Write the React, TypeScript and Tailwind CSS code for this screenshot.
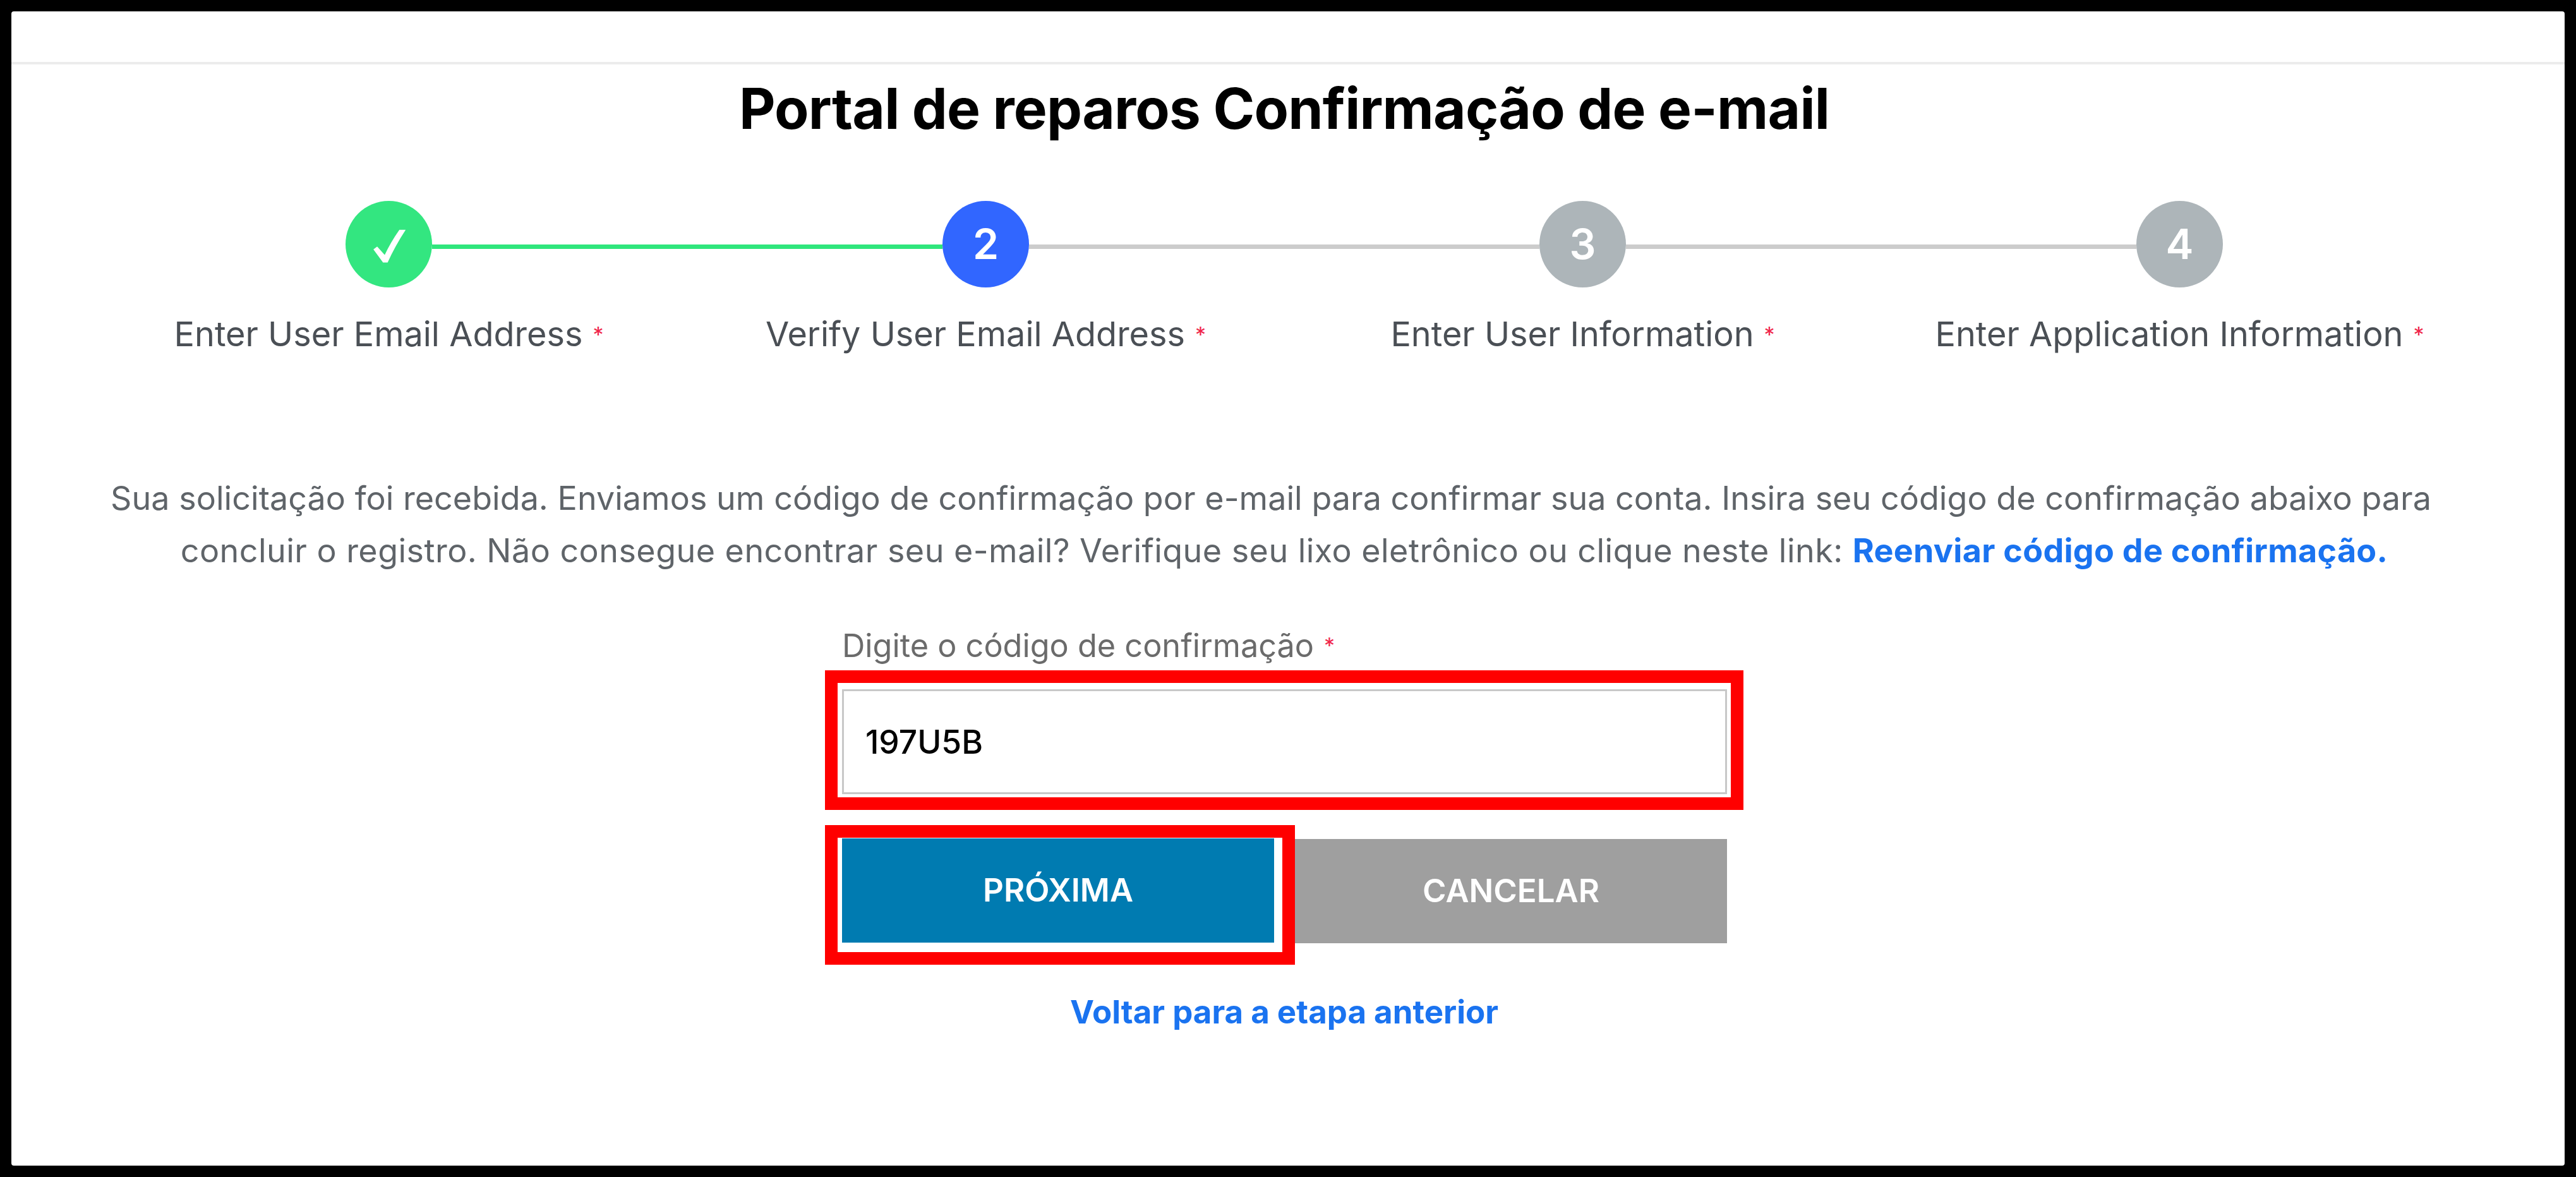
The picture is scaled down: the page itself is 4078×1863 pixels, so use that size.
import React from "react";

function Star() {
  return <span className="text-[#f0274b] text-[34px] leading-none ml-[16px] relative top-[-6px]">*</span>;
}

function Circle({ className, children }: { className: string; children: React.ReactNode }) {
  return (
    <div className={`w-[137px] h-[137px] shrink-0 rounded-full flex items-center justify-center text-white text-[66px] font-semibold ${className}`}>
      {children}
    </div>
  );
}

function Line({ className }: { className: string }) {
  return <div className={`w-[808px] h-[7px] mt-[8px] ${className}`} />;
}

export default function App() {
  const labels = [
    "Enter User Email Address",
    "Verify User Email Address",
    "Enter User Information",
    "Enter Application Information",
  ];
  return (
    <div className="w-[4078px] h-[1863px] bg-black p-[18px] font-['Inter',sans-serif]">
      <div className="w-full h-full bg-white rounded-[4px] flex flex-col">
        <div className="w-full h-[84px] border-b-[4px] border-[#ececec] shrink-0" />
        <div className="w-full pr-[12px] flex flex-col items-center">
          <h1 className="mt-[16px] text-[89px] leading-[108px] font-bold text-black tracking-[-0.8px]">Portal de reparos Confirmação de e-mail</h1>

          <div className="mt-[92px] flex items-center">
            <Circle className="bg-[#33e680]">
              <svg viewBox="135 52 413 413" className="w-[137px] h-[137px]">
                <path d="M268 283 L286 270 L322 310 Q350 250 392 190 L422 190 Q370 270 336 346 L314 346 Z" fill="white" />
              </svg>
            </Circle>
            <Line className="bg-[#2fe67c]" />
            <Circle className="bg-[#3166ff]">2</Circle>
            <Line className="bg-[#cccccc]" />
            <Circle className="bg-[#adb5b9]">3</Circle>
            <Line className="bg-[#cccccc]" />
            <Circle className="bg-[#adb5b9]">4</Circle>
          </div>

          <div className="mt-[38px] grid grid-cols-[repeat(4,945px)]">
            {labels.map((l) => (
              <div key={l} className="text-center text-[54px] leading-[72px] text-[#4a4f55]">
                {l}
                <Star />
              </div>
            ))}
          </div>

          <p className="mt-[182px] w-[3800px] text-center text-[52px] leading-[83px] text-[#5f6469]">
            <span className="block pr-[42px] tracking-[0.05px]">
              Sua solicitação foi recebida. Enviamos um código de confirmação por e-mail para confirmar sua conta. Insira seu código de confirmação abaixo para
            </span>
            <span className="block tracking-[0.47px]">
              concluir o registro. Não consegue encontrar seu e-mail? Verifique seu lixo eletrônico ou clique neste link: <a className="font-bold text-[#1a73f0] tracking-[0.3px]">Reenviar código de confirmação.</a>
            </span>
          </p>

          <div className="mt-[73px] w-[1454px] flex flex-col">
            <label className="ml-[27px] text-[50.4px] leading-[72px] text-[#6b6b6b]">
              Digite o código de confirmação
              <Star />
            </label>
            <div className="mt-[3px] border-[20px] border-[#ff0000] bg-white pl-[7px] pr-[6px] pt-[10px] pb-[5px] h-[221px]">
              <input
                readOnly
                value="197U5B"
                className="w-full h-full border-[3px] border-[#c8c8c8] bg-white px-[34px] text-[51.5px] font-medium text-black outline-none"
              />
            </div>
            <div className="mt-[24px] flex items-start">
              <div className="w-[744px] h-[221px] border-[20px] border-[#ff0000] bg-white pl-[7px] pt-[1px] pr-[13px] shrink-0">
                <button className="w-full h-[165px] bg-[#007bb1] text-white text-[51px] font-semibold">PRÓXIMA</button>
              </div>
              <button className="mt-[22px] w-[684px] h-[165px] bg-[#9f9f9f] text-white text-[51px] font-semibold">CANCELAR</button>
            </div>
            <a className="mt-[39px] text-center text-[51px] leading-[72px] font-bold text-[#1a73f0]">Voltar para a etapa anterior</a>
          </div>
        </div>
      </div>
    </div>
  );
}
